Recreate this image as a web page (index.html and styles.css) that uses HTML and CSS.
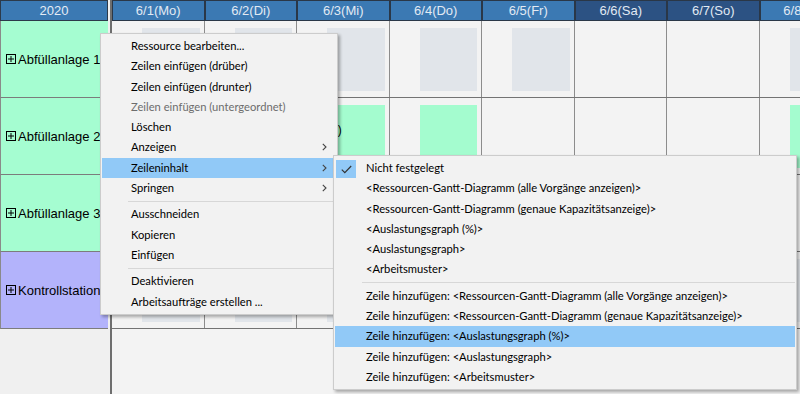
FILE: index.html
```html
<!DOCTYPE html>
<html lang="de">
<head>
<meta charset="utf-8">
<title>Ressourcen</title>
<link rel="stylesheet" href="styles.css">
</head>
<body>
<div class="app">
  <div class="side">
    <div class="side-head">2020</div>
    <div class="res green"><svg class="plus" width="10" height="10" viewBox="0 0 10 10"><rect x="0.5" y="0.5" width="9" height="9" fill="none" stroke="#000"/><path d="M2 5H8M5 2V8" stroke="#000" fill="none"/></svg><span>Abfüllanlage 1</span></div>
    <div class="res green"><svg class="plus" width="10" height="10" viewBox="0 0 10 10"><rect x="0.5" y="0.5" width="9" height="9" fill="none" stroke="#000"/><path d="M2 5H8M5 2V8" stroke="#000" fill="none"/></svg><span>Abfüllanlage 2</span></div>
    <div class="res green"><svg class="plus" width="10" height="10" viewBox="0 0 10 10"><rect x="0.5" y="0.5" width="9" height="9" fill="none" stroke="#000"/><path d="M2 5H8M5 2V8" stroke="#000" fill="none"/></svg><span>Abfüllanlage 3</span></div>
    <div class="res purple"><svg class="plus" width="10" height="10" viewBox="0 0 10 10"><rect x="0.5" y="0.5" width="9" height="9" fill="none" stroke="#000"/><path d="M2 5H8M5 2V8" stroke="#000" fill="none"/></svg><span>Kontrollstation</span></div>
  </div>
  <div class="divider"></div>
  <div class="chart">
    <div class="heads">
      <div class="h">6/1(Mo)</div>
      <div class="h">6/2(Di)</div>
      <div class="h">6/3(Mi)</div>
      <div class="h">6/4(Do)</div>
      <div class="h">6/5(Fr)</div>
      <div class="h we">6/6(Sa)</div>
      <div class="h we">6/7(So)</div>
      <div class="h">6/8(Mo)</div>
    </div>
    <div class="row">
      <div class="cell"><div class="bar gray"></div></div>
      <div class="cell"><div class="bar gray"></div></div>
      <div class="cell"><div class="bar gray"></div></div>
      <div class="cell"><div class="bar gray"></div></div>
      <div class="cell"><div class="bar gray"></div></div>
      <div class="cell"></div>
      <div class="cell"></div>
      <div class="cell"><div class="bar gray"></div></div>
    </div>
    <div class="row">
      <div class="cell"></div>
      <div class="cell"></div>
      <div class="cell"><div class="bar green"><span class="bar-label">(0)</span></div></div>
      <div class="cell"><div class="bar green"></div></div>
      <div class="cell"></div>
      <div class="cell"></div>
      <div class="cell"></div>
      <div class="cell"><div class="bar green"></div></div>
    </div>
    <div class="row">
      <div class="cell"></div>
      <div class="cell"></div>
      <div class="cell"></div>
      <div class="cell"></div>
      <div class="cell"></div>
      <div class="cell"></div>
      <div class="cell"></div>
      <div class="cell"></div>
    </div>
    <div class="row">
      <div class="cell"><div class="bar gray"></div></div>
      <div class="cell"><div class="bar gray"></div></div>
      <div class="cell"><div class="bar gray"></div></div>
      <div class="cell"><div class="bar gray"></div></div>
      <div class="cell"><div class="bar gray"></div></div>
      <div class="cell"></div>
      <div class="cell"></div>
      <div class="cell"><div class="bar gray"></div></div>
    </div>
  </div>

  <div class="menu main">
    <div class="mi">Ressource bearbeiten...</div>
    <div class="mi">Zeilen einfügen (drüber)</div>
    <div class="mi">Zeilen einfügen (drunter)</div>
    <div class="mi dis">Zeilen einfügen (untergeordnet)</div>
    <div class="mi">Löschen</div>
    <div class="mi">Anzeigen<svg class="arr" width="5" height="8" viewBox="0 0 5 8"><path d="M0.8 0.8L4 4L0.8 7.2" fill="none" stroke="#444" stroke-width="1.1"/></svg></div>
    <div class="mi on">Zeileninhalt<svg class="arr" width="5" height="8" viewBox="0 0 5 8"><path d="M0.8 0.8L4 4L0.8 7.2" fill="none" stroke="#444" stroke-width="1.1"/></svg></div>
    <div class="mi">Springen<svg class="arr" width="5" height="8" viewBox="0 0 5 8"><path d="M0.8 0.8L4 4L0.8 7.2" fill="none" stroke="#444" stroke-width="1.1"/></svg></div>
    <div class="sep"></div>
    <div class="mi">Ausschneiden</div>
    <div class="mi">Kopieren</div>
    <div class="mi">Einfügen</div>
    <div class="sep"></div>
    <div class="mi">Deaktivieren</div>
    <div class="mi">Arbeitsaufträge erstellen ...</div>
  </div>

  <div class="menu sub">
    <div class="mi"><span class="chk"><svg width="11" height="9" viewBox="0 0 11 9"><path d="M0.8 4.6L3.8 7.6L10.2 1" fill="none" stroke="#333" stroke-width="1.2"/></svg></span>Nicht festgelegt</div>
    <div class="mi">&lt;Ressourcen-Gantt-Diagramm (alle Vorgänge anzeigen)&gt;</div>
    <div class="mi">&lt;Ressourcen-Gantt-Diagramm (genaue Kapazitätsanzeige)&gt;</div>
    <div class="mi">&lt;Auslastungsgraph (%)&gt;</div>
    <div class="mi">&lt;Auslastungsgraph&gt;</div>
    <div class="mi">&lt;Arbeitsmuster&gt;</div>
    <div class="sep"></div>
    <div class="mi">Zeile hinzufügen: &lt;Ressourcen-Gantt-Diagramm (alle Vorgänge anzeigen)&gt;</div>
    <div class="mi">Zeile hinzufügen: &lt;Ressourcen-Gantt-Diagramm (genaue Kapazitätsanzeige)&gt;</div>
    <div class="mi on">Zeile hinzufügen: &lt;Auslastungsgraph (%)&gt;</div>
    <div class="mi">Zeile hinzufügen: &lt;Auslastungsgraph&gt;</div>
    <div class="mi">Zeile hinzufügen: &lt;Arbeitsmuster&gt;</div>
  </div>
</div>
</body>
</html>
```

FILE: styles.css
```css
html, body {
  margin: 0;
  padding: 0;
}
body {
  width: 800px;
  height: 394px;
  overflow: hidden;
  background: #f0f0f0;
  font-family: "Liberation Sans", Arial, sans-serif;
}
.app {
  position: relative;
  display: flex;
  height: 394px;
}

/* left resource column */
.side {
  width: 108px;
  flex: none;
}
.side-head {
  height: 21px;
  box-sizing: border-box;
  background: #3b79b3;
  border: 1px solid #2c3a4a;
  color: #e4ecf5;
  font-size: 13px;
  line-height: 19px;
  text-align: center;
}
.res {
  height: 77px;
  box-sizing: border-box;
  border-left: 1px solid #8a8a8a;
  border-bottom: 1px solid #7c7c7c;
  display: flex;
  align-items: center;
  gap: 2px;
  padding-left: 5px;
  font-size: 13px;
  white-space: nowrap;
  color: #000;
}
.res.green { background: #a5fdd1; }
.res.purple { background: #b3b3fb; }
.plus { flex: none; }

.divider {
  width: 2px;
  margin-left: 2px;
  flex: none;
  background: #6e6e6e;
}

/* chart */
.chart {
  flex: 1;
  min-width: 0;
  overflow: hidden;
  background: #f3f3f3;
}
.heads {
  display: grid;
  grid-template-columns: repeat(8, 92.5px);
  height: 21px;
}
.h {
  box-sizing: border-box;
  border: 1px solid #2a3747;
  background: #3b79b3;
  color: #e2eaf3;
  font-size: 13px;
  line-height: 19px;
  text-align: center;
  white-space: nowrap;
  overflow: hidden;
}
.h.we { background: #2c5283; }

.row {
  display: grid;
  grid-template-columns: repeat(8, 92.5px);
  height: 77px;
  box-sizing: border-box;
  border-bottom: 1px solid #737373;
}
.cell {
  box-sizing: border-box;
  border-right: 1px solid #8c8c8c;
  padding: 7px 4px 6px 30px;
}
.bar {
  height: 100%;
  position: relative;
}
.bar.gray { background: #e1e5ea; }
.bar.green { background: #a4fccf; }
.bar-label {
  position: absolute;
  left: 0;
  top: 18px;
  font-size: 12px;
  color: #000;
}

/* context menus */
.menu {
  position: absolute;
  box-sizing: border-box;
  background: #f2f2f2;
  border: 1px solid #cccccc;
  box-shadow: 2px 2px 3px rgba(0, 0, 0, 0.32);
  padding: 2px 1px;
  font-family: Lato, "Noto Sans", sans-serif;
  font-size: 11.2px;
  color: #000;
}
.menu.main {
  left: 100px;
  top: 33px;
  width: 238px;
}
.menu.sub {
  left: 333px;
  top: 155px;
  width: 464px;
}
.mi {
  position: relative;
  height: 20.3px;
  line-height: 20.3px;
  padding-left: 29px;
  white-space: nowrap;
}
.sub .mi { padding-left: 31px; }
.mi.dis { color: #6d6d6d; }
.mi.on { background: #91c9f7; }
.arr {
  position: absolute;
  right: 9px;
  top: 6px;
}
.chk {
  position: absolute;
  left: 1px;
  top: 2px;
  width: 20px;
  height: 18px;
  background: #91c9f7;
  display: flex;
  align-items: center;
  justify-content: center;
}
.sep {
  height: 6px;
  display: flex;
  align-items: center;
  margin-left: 26px;
}
.sub .sep { margin-left: 27px; }
.sep::before {
  content: "";
  flex: 1;
  height: 1px;
  background: #d7d7d7;
}
```
